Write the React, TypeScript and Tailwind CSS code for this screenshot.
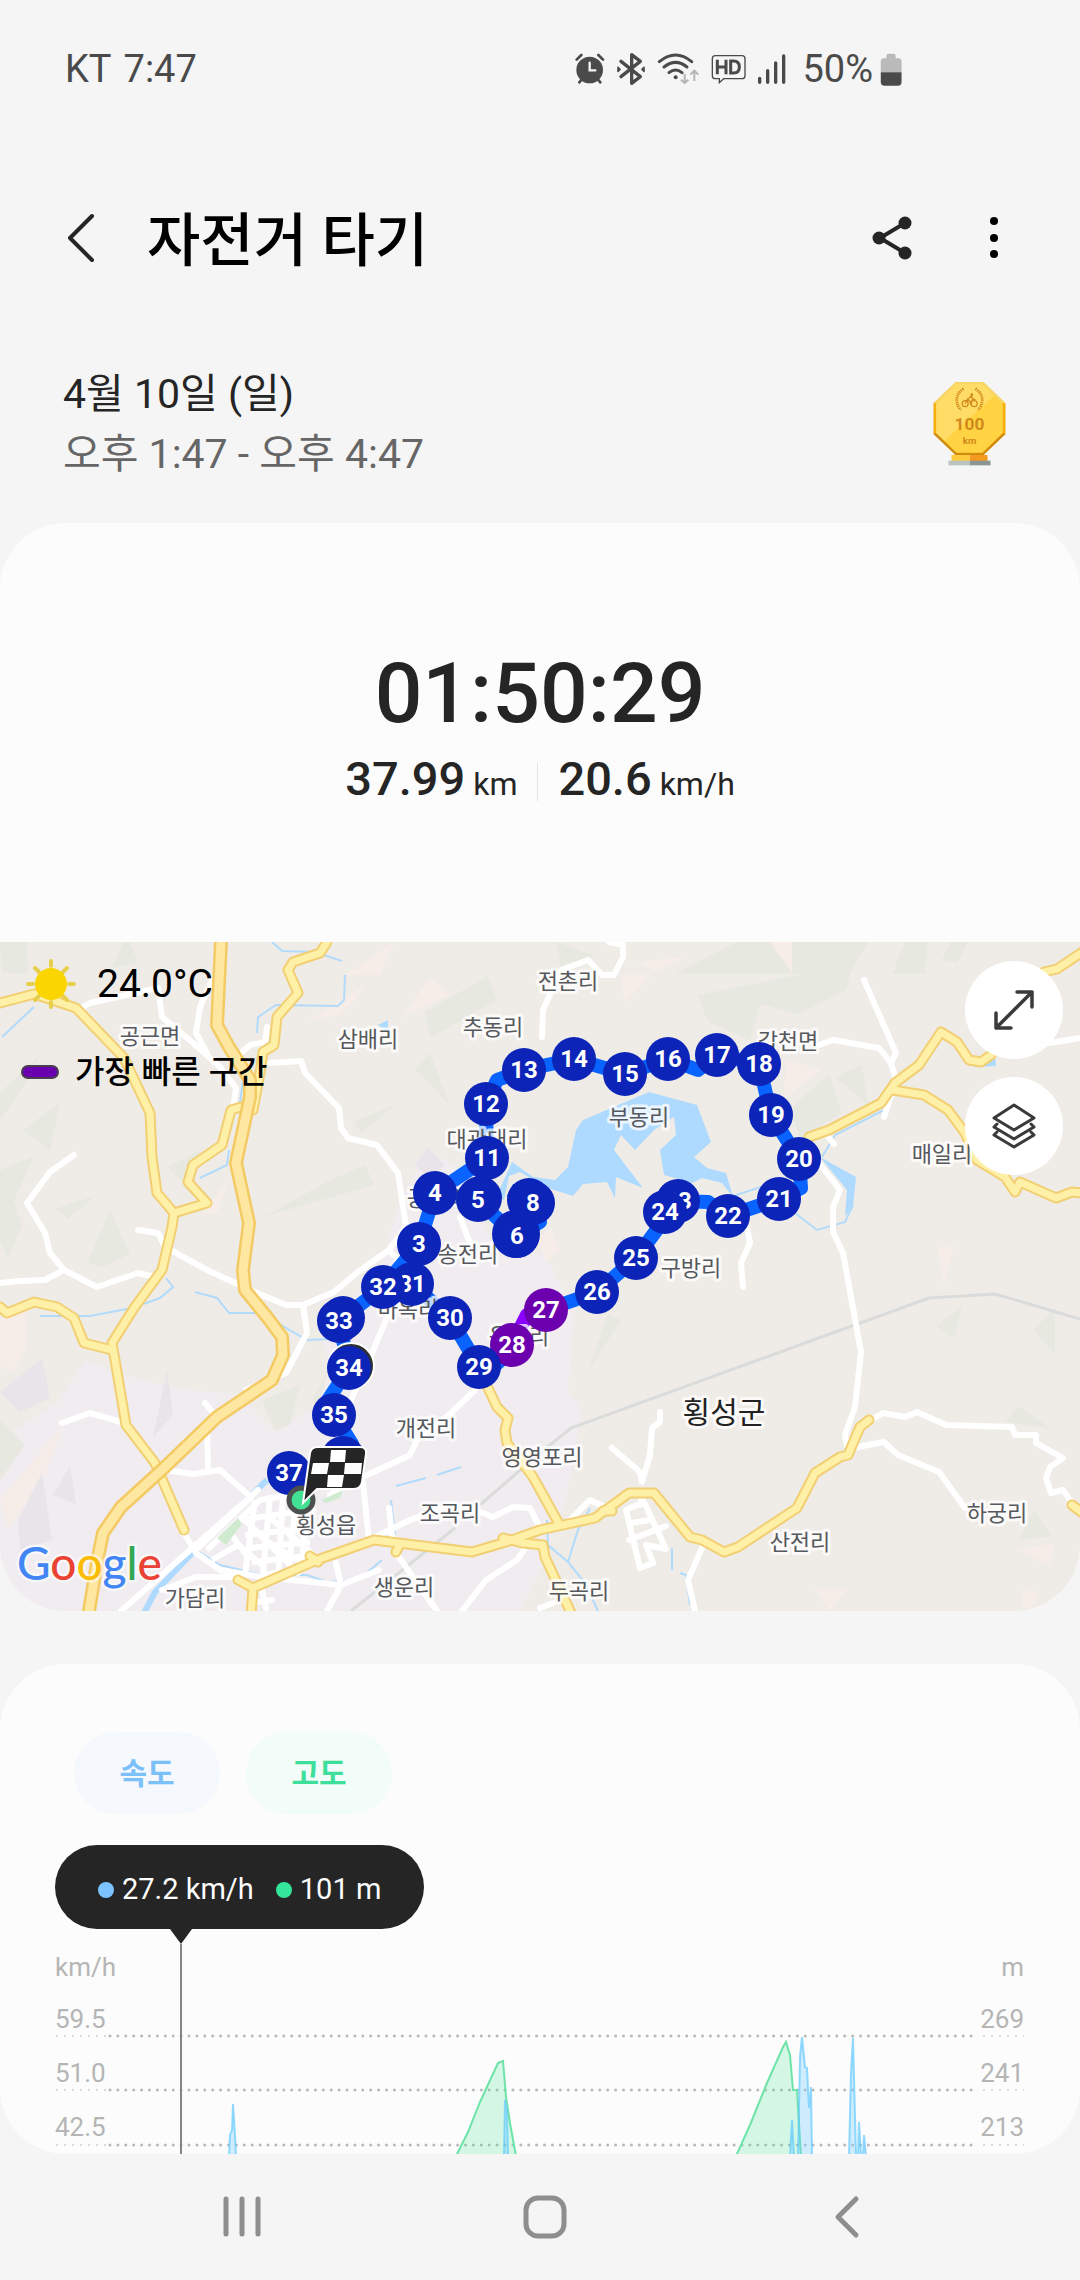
import type { ReactNode } from "react";

/* ---------- status bar icons ---------- */

function AlarmIcon() {
  return (
    <svg className="h-[32px] w-[30px]" viewBox="47 68 90 96" aria-hidden="true">
      <circle cx="91" cy="119" r="40" fill="#4a4a4a" />
      <path d="M66 74 52 88M117 74l14 14M60 156l10-12M123 156l-10-12" stroke="#4a4a4a" strokeWidth="8" strokeLinecap="round" />
      <path d="M91 97v23h17" stroke="#f5f5f5" strokeWidth="7" fill="none" strokeLinecap="round" />
    </svg>
  );
}

function BluetoothIcon() {
  return (
    <svg className="h-[34px] w-[30px]" viewBox="179 65 90 100" aria-hidden="true">
      <path d="m194 92 58 46-26 20V72l26 20-58 46" stroke="#4a4a4a" strokeWidth="10" fill="none" strokeLinecap="round" strokeLinejoin="round" />
      <path d="m185 110 6 6-6 6ZM263 110l-6 6 6 6Z" stroke="#4a4a4a" strokeWidth="5" fill="#4a4a4a" strokeLinejoin="round" />
    </svg>
  );
}

function WifiIcon() {
  return (
    <svg className="h-[34px] w-[43px]" viewBox="304 62 129 102" aria-hidden="true">
      <g stroke="#4a4a4a" strokeWidth="9" fill="none" strokeLinecap="round">
        <path d="M311 91q49-40 97 0" />
        <path d="M325 107q35-28 69 0" />
        <path d="M340 124q20-16 39 0" />
      </g>
      <circle cx="360" cy="138" r="6" fill="#4a4a4a" />
      <path d="M387 127v28m-11-10 11 10 11-10M416 149v-30m-12 11 12-12 12 12" stroke="#b4b4b4" strokeWidth="6" fill="none" />
    </svg>
  );
}

function HdIcon() {
  return (
    <svg className="h-[30px] w-[35px]" viewBox="465 72 105 90" aria-hidden="true">
      <path d="M478 77h80q9 0 9 9v51q0 9-9 9h-55l-13 12v-12h-12q-9 0-9-9V86q0-9 9-9Z" stroke="#4a4a4a" strokeWidth="4" fill="none" />
      <path d="M484 89v44M510 89v44M484 111h26M524 93v36h9q17 0 17-18t-17-18Z" stroke="#4a4a4a" strokeWidth="9" fill="none" />
    </svg>
  );
}

function SignalIcon() {
  return (
    <svg className="h-[30px] w-[29px]" viewBox="595 68 87 90" aria-hidden="true">
      <path d="M603 141v12M627 118v35M651 95v58M675 74v79" stroke="#4a4a4a" strokeWidth="10" strokeLinecap="round" />
    </svg>
  );
}

function BatteryIcon() {
  return (
    <svg className="h-[33px] w-[22px]" viewBox="958 62 66 100" aria-hidden="true">
      <path d="M960 120V88q0-10 10-10h7V70q0-6 6-6h16q6 0 6 6v8h8q10 0 10 10v32Z" fill="#bababa" />
      <path d="M960 120h63v30q0 11-11 11h-41q-11 0-11-11Z" fill="#4a4a4a" />
    </svg>
  );
}

/* ---------- badge ---------- */

function Badge() {
  return (
    <svg className="h-[84px] w-[73px]" viewBox="41 32 218 252" role="img" aria-label="100 km">
      <path d="M96 251h55v18H96Z" fill="#ffcb3c" />
      <path d="M151 251h53v18h-53Z" fill="#f59a1e" />
      <path d="M87 268h64v14H87Z" fill="#b9c4c1" />
      <path d="M151 268h62v14h-62Z" fill="#8b9695" />
      <path d="M108 33h84l66 63v92l-66 63h-84l-66-63V96Z" fill="#f5ae0b" />
      <path d="M108 33h84l66 63h-12l-58-57h-76l-58 57H42Z" fill="#f7d768" />
      <path d="m42 188 66 63h84l66-63-8-3-62 59h-76l-62-59Z" fill="#cf8b12" />
      <path d="M111 38h78l61 61v86l-61 59h-78l-61-59V99Z" fill="#ffd341" />
      <path d="M111 38h78l35 35L75 208l-25-23V99Z" fill="#ffdc66" />
      <g stroke="#d08a1c" fill="none" strokeWidth="3.5">
        <circle cx="137" cy="97" r="9" />
        <circle cx="164" cy="97" r="9" />
        <path d="m137 97 7-14 9 10v8M146 84l9-10 6 10h7M152 96l8-14" />
        <circle cx="157" cy="70" r="2.5" fill="#d08a1c" />
        <path d="M132 52q-22 16-20 36t13 27M168 52q22 16 20 36t-13 27" strokeWidth="8" strokeDasharray="4 2.5" />
      </g>
      <text x="150" y="176" textAnchor="middle" className="font-[family-name:Roboto] text-[52px] font-bold" fill="#d08a1c">100</text>
      <text x="150" y="218" textAnchor="middle" className="font-[family-name:Roboto] text-[29px] font-bold" fill="#d08a1c">km</text>
    </svg>
  );
}

/* ---------- map ---------- */

const EXPRESSWAY =
  "M221 942 217 1025 229 1047 250 1080 250 1097 236 1163 249 1223 243 1270 245 1290 267 1317 282 1337 283 1355 272 1380 217 1417 165 1467 121 1507 103 1533 98 1557 89 1611";

const MAIN_ROADS = [
  "M0 1003 34 994 76 1008 124 1058 150 1113 152 1157 157 1193 174 1213 172 1227 162 1270 134 1308 112 1343 115 1360 126 1425 155 1463 184 1530",
  "M0 1307 7 1313 34 1302 57 1307 74 1318 84 1343 112 1350",
  "M327 942 320 953 293 962 288 970 298 993 277 1017 274 1045 263 1052 260 1073 253 1110",
  "M241 1107 231 1110 222 1145 193 1165 188 1182 207 1203 174 1213",
  "M809 1137 829 1130 881 1103 895 1083 919 1065 941 1032 957 1042 969 1060 981 1062 991 1055",
  "M893 1090 924 1095 948 1110 965 1133 977 1160 1005 1177 1015 1192 1020 1182 1056 1198 1072 1192 1084 1193",
  "M1044 972 1057 969 1084 951",
  "M238 1580 253 1588 317 1560 374 1540 472 1552 506 1542 540 1530 595 1518 629 1493 654 1493 690 1537 702 1540 724 1552 738 1547 797 1508 815 1473 840 1457 848 1455 860 1427 869 1420",
  "M253 1588 251 1615",
  "M488 1388 497 1407 508 1418 505 1430 507 1443 533 1477 558 1522",
  "M503 1538 523 1543 543 1545 545 1557 572 1615",
  "M1072 1505 1084 1514",
  "M310 1556 318 1562",
  "M396 1552 400 1544",
  "M603 1511 612 1511",
];

const LOCAL_ROADS = [
  "M83 1007 90 1003 158 988 162 1017 193 1043 220 1067 236 1088 234 1103",
  "M212 980 200 1007 196 1033 207 1053",
  "M241 1053 250 1045 265 1042 267 1027",
  "M270 1063 301 1061 305 1073 339 1108 341 1128 348 1138 377 1145 398 1173 406 1227 389 1250 358 1272 334 1292 303 1305 286 1305 257 1293 207 1270 165 1247",
  "M389 1250 400 1262",
  "M303 1305 307 1333 286 1373 246 1390",
  "M74 1155 50 1172 27 1203 45 1233 50 1253 64 1270 97 1287 138 1273 155 1277",
  "M64 1270 45 1280 20 1281 0 1283",
  "M138 1230 158 1233 165 1247",
  "M609 942 623 945 623 957 614 975 602 975 588 960 561 970 543 1010 542 1037",
  "M864 980 896 1053 891 1063 896 1080 884 1117",
  "M819 1045 833 1040 879 1048 891 1063",
  "M819 1163 840 1190 833 1207 833 1232 843 1253 861 1352 855 1407 845 1435 848 1450",
  "M747 1227 750 1243 741 1263 743 1287",
  "M1050 1043 1080 1038",
  "M828 1137 834 1144",
  "M871 1420 883 1413 905 1417 917 1412 946 1425 1012 1427 1015 1435 1036 1435 1036 1443 1063 1458 1050 1467 1046 1478 1051 1493 1063 1490 1072 1503",
  "M857 1447 884 1442 898 1455 939 1472 965 1508",
  "M612 1448 640 1472 642 1482 650 1455 652 1428 660 1422 660 1412",
  "M702 1548 688 1580 695 1611",
  "M626 1510 640 1568 653 1563 646 1545 666 1549 644 1502Z",
  "M629 1540 666 1526M642 1498 640 1505M632 1523 650 1520",
  "M567 1523 590 1500 607 1508",
  "M205 1403 215 1415 207 1427 208 1467",
  "M165 1470 193 1474 220 1470 251 1497 196 1550",
  "M258 1490 121 1611",
  "M184 1533 196 1553 220 1570 262 1577 341 1585 379 1570",
  "M62 1423 90 1413 121 1422",
  "M389 1313 372 1353 351 1400 348 1440",
  "M475 1390 451 1413 417 1440 410 1455 363 1477 330 1495",
  "M363 1483 369 1540",
  "M375 1537 410 1520 450 1505 480 1512 493 1517 513 1507 530 1508 541 1530",
  "M389 1508 393 1545",
  "M396 1553 437 1611M462 1611 486 1580 517 1560 524 1550",
  "M336 1563 341 1585 327 1611",
  "M162 1590 196 1577 238 1577",
  "M460 1217 470 1243",
  "M262 1590 266 1608M258 1602 272 1600",
  "M540 1608 553 1603",
];

const TOWN_STREETS = [
  "M207 1550 260 1500 290 1495 315 1512 M212 1560 238 1545 262 1565 M240 1515 300 1575 M228 1530 250 1560",
  "M255 1500 245 1575 M270 1495 262 1585 M283 1495 278 1580 M296 1500 288 1578 M306 1510 302 1565",
  "M240 1520 310 1510 M245 1535 312 1528 M250 1548 310 1542 M252 1562 308 1556 M262 1575 300 1570",
  "M265 1540 310 1568 M270 1518 320 1560",
];

const STREAMS = [
  "M2 1037 34 1007",
  "M257 1033 258 1017 276 1005 338 1006",
  "M272 942 282 951 315 952 342 961",
  "M345 975 344 1000 338 1006",
  "M195 1292 217 1298 229 1313 255 1313 272 1320 307 1340 331 1339",
  "M166 1278 173 1287 160 1298 132 1308 90 1316 40 1316",
  "M196 1550 220 1565 262 1575 307 1575 327 1582 358 1580 382 1560",
  "M795 1213 817 1230 845 1222 853 1205",
  "M822 1157 835 1135 884 1110",
  "M733 1196 770 1184",
  "M229 1150 227 1165 200 1178",
  "M243 1080 240 1103",
  "M396 1486 426 1478M437 1475 461 1467",
  "M391 1500 395 1535",
  "M590 1508 578 1530 568 1562 585 1583 598 1611",
  "M547 1520 548 1545 568 1562",
  "M672 1548 672 1570M680 1573 686 1575 690 1605",
];

const GREEN_HILLS =
  "M0 942H27L28 974 2 972ZM123 942 112 968 138 962 130 942ZM0 1093 40 1054 32 1075 0 1120ZM23 1130 60 1103 50 1151ZM0 1170 34 1156 14 1200 22 1225 8 1260 0 1240ZM55 1209 96 1195 68 1219ZM88 1262 110 1209 130 1254 100 1268ZM168 1167 200 1150 185 1185ZM263 1217 330 1180 365 1165 374 1185ZM353 1122 396 1104 362 1133ZM425 1012 488 976 497 1000 430 1038ZM430 1053 450 1105 415 1070ZM557 942 594 955 560 970ZM675 974 737 942H868L850 974ZM698 995 804 974H850L846 990 798 1014 760 1004 750 1040 708 1022ZM892 974 905 942H928L925 974ZM942 960 950 942H968L957 963ZM790 1110 829 1073 842 1113 800 1138ZM835 1077 862 1065 868 1105ZM588 1371 608 1314 621 1320ZM936 1326 962 1306 954 1338ZM1033 1330 1055 1308 1055 1354ZM1006 1422 1018 1406 1050 1428ZM1018 1540 1034 1510 1052 1536ZM0 1420 25 1445 0 1480ZM312 1400 327 1372 318 1412ZM275 1430 262 1400 300 1385 290 1425Z";

const PEACH_HILLS =
  "M310 1020 365 985 355 1000 340 1015ZM345 975 394 942 380 975ZM402 1017 430 978 450 995ZM638 962 686 957 655 972ZM620 975 650 975 625 1003ZM770 942H792V973ZM787 1060 821 1070 783 1100ZM937 1247H954L944 1284ZM1017 1549 1054 1544 1050 1566ZM815 1589H847L830 1611ZM1023 1590 1040 1592 1030 1610 1023 1608ZM538 1240 550 1228 560 1250 546 1262ZM0 1315 28 1310 25 1350 14 1372 0 1365ZM0 1500 64 1424 45 1475 8 1530ZM200 1216 228 1180 218 1212Z";

const MAUVE_HILLS =
  "M0 1392 42 1358 50 1398 20 1412ZM153 1437 167 1370 173 1415ZM18 1520 42 1473 52 1540 20 1550ZM53 1495 70 1466 76 1504ZM415 1165 428 1147 445 1165 430 1178Z";

const LAKE =
  "M497 1195 512 1162 533 1177 555 1180 568 1167 576 1130 583 1120 649 1092 697 1105 711 1142 694 1157 707 1168 726 1173 733 1197 722 1183 702 1178 692 1183 664 1175 660 1150 676 1135 674 1117 654 1130 635 1150 621 1135 614 1150 643 1188 616 1177 615 1198 607 1182 583 1184 573 1196 545 1187 520 1172 509 1176 504 1200Z";

type Label = { name: string; x: number; y: number };

const LABELS: Label[] = [
  { name: "공근면", x: 150, y: 1036 },
  { name: "삼배리", x: 368, y: 1039 },
  { name: "추동리", x: 493, y: 1027 },
  { name: "전촌리", x: 568, y: 981 },
  { name: "갑천면", x: 788, y: 1041 },
  { name: "부동리", x: 639, y: 1117 },
  { name: "매일리", x: 942, y: 1154 },
  { name: "대관대리", x: 487, y: 1139 },
  { name: "공근리", x: 437, y: 1198 },
  { name: "송전리", x: 468, y: 1254 },
  { name: "구방리", x: 691, y: 1268 },
  { name: "마옥리", x: 408, y: 1309 },
  { name: "용둔리", x: 519, y: 1336 },
  { name: "개전리", x: 426, y: 1428 },
  { name: "영영포리", x: 542, y: 1457 },
  { name: "조곡리", x: 450, y: 1513 },
  { name: "횡성읍", x: 326, y: 1525 },
  { name: "가담리", x: 195, y: 1598 },
  { name: "생운리", x: 404, y: 1587 },
  { name: "두곡리", x: 579, y: 1591 },
  { name: "산전리", x: 800, y: 1542 },
  { name: "하궁리", x: 997, y: 1513 },
];

type Marker = { km: string; x: number; y: number; fast?: boolean };

const MARKERS: Marker[] = [
  { km: "37", x: 289, y: 1473 },
  { km: "35", x: 334, y: 1415 },
  { km: "34", x: 349, y: 1368 },
  { km: "33", x: 339, y: 1321 },
  { km: "31", x: 412, y: 1284 },
  { km: "32", x: 383, y: 1287 },
  { km: "30", x: 450, y: 1318 },
  { km: "28", x: 512, y: 1345, fast: true },
  { km: "29", x: 479, y: 1367 },
  { km: "27", x: 546, y: 1310, fast: true },
  { km: "26", x: 597, y: 1292 },
  { km: "25", x: 636, y: 1258 },
  { km: "23", x: 678, y: 1201 },
  { km: "24", x: 665, y: 1212 },
  { km: "22", x: 728, y: 1216 },
  { km: "21", x: 779, y: 1199 },
  { km: "20", x: 799, y: 1159 },
  { km: "19", x: 771, y: 1115 },
  { km: "18", x: 759, y: 1064 },
  { km: "17", x: 717, y: 1055 },
  { km: "16", x: 668, y: 1059 },
  { km: "15", x: 625, y: 1074 },
  { km: "14", x: 574, y: 1059 },
  { km: "13", x: 524, y: 1070 },
  { km: "12", x: 486, y: 1104 },
  { km: "5", x: 478, y: 1200 },
  { km: "11", x: 487, y: 1158 },
  { km: "4", x: 435, y: 1193 },
  { km: "3", x: 419, y: 1244 },
  { km: "6", x: 517, y: 1236 },
  { km: "8", x: 533, y: 1203 },
];

const ROUTE =
  "M300 1500 289 1478M343 1460 352 1444 334 1415 328 1400 349 1368 339 1321 383 1287 419 1244 435 1193 487 1158 486 1104 497 1080 524 1070 574 1059 625 1074 668 1059 698 1070 717 1055 759 1064 771 1115 799 1159 801 1188 779 1199 728 1216 708 1202 678 1201 636 1258 597 1292 546 1310M512 1350 492 1368 479 1367 450 1318 412 1284 383 1287M435 1193 478 1200 516 1236 540 1222 532 1202 510 1190";

function RouteMap() {
  return (
    <svg
      className="block aspect-[1080/669] w-full"
      viewBox="0 942 1080 669"
      preserveAspectRatio="xMidYMid slice"
      role="img"
      aria-label="운동 경로 지도"
    >
      <rect y="942" width="1080" height="669" fill="#efece7" />
      <path
        d="M0 1440 60 1400 85 1360 125 1375 170 1388 240 1395 275 1432 318 1405 330 1370 320 1330 380 1270 400 1200 428 1150 470 1175 490 1240 545 1255 575 1310 568 1390 582 1410 566 1500 545 1560 520 1611H0Z"
        fill="#f0ecf0"
      />
      <path d={GREEN_HILLS} fill="#e7e8df" />
      <path d={PEACH_HILLS} fill="#f6ede8" />
      <path d={MAUVE_HILLS} fill="#e8e4e9" />
      <path d="M540 1453 571 1428 929 1298 995 1294 1080 1319M540 1453 480 1505M455 1528 351 1611" stroke="#d9dcdb" strokeWidth="3" fill="none" />
      <path d={LAKE} fill="#aedaff" />
      <path d="M820 1157 856 1177 853 1207 845 1216 847 1190ZM970 1063 995 1055 996 1066 975 1067ZM378 1025 388 1020 388 1032Z" fill="#aedaff" />
      <path d="M267 1480 200 1545 155 1592 143 1615" stroke="#aedaff" strokeWidth="6" fill="none" />
      <g stroke="#b2dbfb" strokeWidth="2" fill="none">
        {STREAMS.map((d) => <path key={d} d={d} />)}
      </g>
      <g stroke="#ffffff" strokeWidth="6" fill="none" strokeLinejoin="round" strokeLinecap="round">
        {LOCAL_ROADS.map((d) => <path key={d} d={d} />)}
      </g>
      <g stroke="#ffffff" strokeWidth="6" fill="none">
        {TOWN_STREETS.map((d) => <path key={d} d={d} />)}
      </g>
      <path d="M217 1538 238 1518 242 1524 226 1545ZM322 1500 343 1490 340 1498 325 1503Z" fill="#cfeace" />
      <g fill="none" strokeLinejoin="round" strokeLinecap="round">
        <g stroke="#f2cf72" strokeWidth="11">
          {MAIN_ROADS.map((d) => <path key={d} d={d} />)}
        </g>
        <g stroke="#fff0a8" strokeWidth="7">
          {MAIN_ROADS.map((d) => <path key={d} d={d} />)}
        </g>
        <path d={EXPRESSWAY} stroke="#f4ca64" strokeWidth="14" />
        <path d={EXPRESSWAY} stroke="#fee7a0" strokeWidth="9" />
      </g>

      <path d={ROUTE} stroke="#0963ff" strokeWidth="14" fill="none" strokeLinejoin="round" />
      <path d="M546 1310 527 1315 512 1345" stroke="#8a00ff" strokeWidth="14" fill="none" strokeLinejoin="round" />

      <g
        textAnchor="middle"
        fill="#55585c"
        stroke="#ffffff"
        strokeOpacity="0.75"
        strokeWidth="6"
        strokeLinejoin="round"
        className="font-[family-name:Noto_Sans_CJK_KR,sans-serif] text-[22px] [paint-order:stroke]"
      >
        {LABELS.map((l) => (
          <text key={l.name} x={l.x} y={l.y + 8}>{l.name}</text>
        ))}
        <text x="724" y="1423" fill="#222222" className="text-[30px]">횡성군</text>
      </g>

      <circle cx="351" cy="1366" r="23" fill="#2e3033" stroke="#ffffff" strokeWidth="2" />
      <g fill="#0c24b8">
        <circle cx="343" cy="1458" r="22" />
        <circle cx="343" cy="1318" r="22" />
        <circle cx="516" cy="1234" r="24" />
        <circle cx="480" cy="1198" r="22" />
        <circle cx="529" cy="1200" r="22" />
      </g>
      {MARKERS.map((m) => (
        <g key={m.km}>
          <circle cx={m.x} cy={m.y} r="22" fill={m.fast ? "#6c00ae" : "#0c24b8"} />
          <text x={m.x} y={m.y + 8} textAnchor="middle" fill="#ffffff" className="font-[family-name:Roboto,sans-serif] text-[24px] font-bold">
            {m.km}
          </text>
        </g>
      ))}

      <circle cx="301" cy="1500" r="12" fill="#41e093" stroke="#4b504e" strokeWidth="5" />
      <path
        d="M318 1447H360Q367 1447 366 1454L362 1482Q361 1489 354 1489H317L303 1503 310 1453Q311 1447 318 1447Z"
        fill="#252525"
        stroke="#ffffff"
        strokeWidth="2"
      />
      <path d="M331 1450h15l-1 12h-15ZM313 1463h16l-2 11h-16ZM345 1463h17l-1 11h-17ZM328 1475h16l-2 12h-15Z" fill="#ffffff" />

      <text
        x="17"
        y="1580"
        stroke="#ffffff"
        strokeOpacity="0.6"
        strokeWidth="5"
        strokeLinejoin="round"
        className="font-[family-name:Lato,sans-serif] text-[46px] font-medium [paint-order:stroke]"
      >
        <tspan fill="#4285f4">G</tspan>
        <tspan fill="#ea4335">o</tspan>
        <tspan fill="#fbbc05">o</tspan>
        <tspan fill="#4285f4">g</tspan>
        <tspan fill="#34a853">l</tspan>
        <tspan fill="#ea4335">e</tspan>
      </text>
    </svg>
  );
}

function SunIcon() {
  return (
    <svg className="h-[50px] w-[50px]" viewBox="0 0 50 50" aria-hidden="true">
      <path d="M25 2v5M25 43v5M2 25h5M43 25h5M9 9l4 4M37 37l4 4M41 9l-4 4M13 37l-4 4" stroke="#e6cf4a" strokeWidth="4" strokeLinecap="round" />
      <circle cx="25" cy="25" r="16" fill="#fad500" />
    </svg>
  );
}

function RoundButton({ label, children }: { label: string; children: ReactNode }) {
  return (
    <button type="button" aria-label={label} className="flex size-[98px] items-center justify-center rounded-full bg-white">
      {children}
    </button>
  );
}

/* ---------- chart ---------- */

const AXIS = [
  { speed: "59.5", altitude: "269", y: 2036 },
  { speed: "51.0", altitude: "241", y: 2090 },
  { speed: "42.5", altitude: "213", y: 2145 },
];

const SPEED_PEAKS = [
  "M229 2156 230 2135 232 2130 233 2104 235 2135 236 2156",
  "M504 2156 505 2100 507 2110 508 2156",
  "M790 2156 792 2120 794 2156",
  "M798 2156 800 2057 802 2037 805 2067 807 2068 809 2108 811 2087 812 2156",
  "M849 2156 851 2073 853 2038 856 2156",
  "M858 2156 859 2122 861 2156",
  "M863 2156 864 2135 866 2156",
];

const ALTITUDE_PEAKS = [
  "M456 2156 468 2132 480 2102 498 2063 503 2061 506 2097 510 2123 516 2156",
  "M736 2156 750 2125 767 2083 783 2047 786 2042 790 2055 793 2090 797 2090 801 2156",
];

function ChartPlot() {
  return (
    <svg className="absolute inset-0 h-full w-full" viewBox="55 1944 969 210" preserveAspectRatio="none" aria-hidden="true">
      {AXIS.map((a) => (
        <g key={a.y} stroke="#b9b9b9">
          <path d={`M110 ${a.y}H976`} strokeWidth="3" strokeDasharray="0 7.9" strokeLinecap="round" />
          <path d={`M56 ${a.y}H106M983 ${a.y}H1024`} strokeWidth="1" strokeDasharray="2 6" />
        </g>
      ))}
      {ALTITUDE_PEAKS.map((d) => <path key={d} d={d} fill="#34e38c" fillOpacity="0.2" stroke="#6ee3a9" strokeWidth="2" />)}
      {SPEED_PEAKS.map((d) => <path key={d} d={d} fill="#78cfff" fillOpacity="0.35" stroke="#5cc8ff" strokeOpacity="0.65" strokeWidth="2" />)}
      <path d="M181 1944V2154" stroke="#858585" strokeWidth="2" />
    </svg>
  );
}

export default function App() {
  return (
    <div className="flex min-h-screen flex-col overflow-x-hidden bg-[#f5f5f5] font-[family-name:Roboto,Noto_Sans_CJK_KR,sans-serif] text-[#252525]">
      <div className="flex h-[138px] items-center justify-between pr-[178px] pl-[65px] text-[38px] text-[#4a4a4a]">
        <div className="flex items-baseline gap-3">
          <span>KT</span>
          <span>7:47</span>
        </div>
        <div className="flex items-center gap-[11px]">
          <AlarmIcon />
          <BluetoothIcon />
          <WifiIcon />
          <HdIcon />
          <SignalIcon />
          <div className="flex items-center gap-[7px] pl-[5px]">
            <span>50%</span>
            <BatteryIcon />
          </div>
        </div>
      </div>

      <header className="flex h-[200px] items-center pr-[62px] pl-[56px]">
        <button type="button" aria-label="뒤로" className="flex size-[50px] items-center justify-center">
          <svg className="h-[50px] w-[28px]" viewBox="0 0 28 50" fill="none" stroke="#252525" strokeWidth="4" strokeLinecap="round" strokeLinejoin="round" aria-hidden="true">
            <path d="M25 3 3 25l22 22" />
          </svg>
        </button>
        <h1 className="ml-[41px] flex-1 pt-[6px] text-[58px] leading-[72px] font-medium text-black">자전거 타기</h1>
        <div className="flex items-center gap-[48px]">
          <button type="button" aria-label="공유" className="flex size-[60px] items-center justify-center">
            <svg className="h-[46px] w-[42px]" viewBox="0 0 42 46" aria-hidden="true">
              <path d="M34 8 9 23l25 15" stroke="#252525" strokeWidth="4" fill="none" />
              <circle cx="34" cy="8" r="6.5" fill="#252525" />
              <circle cx="8" cy="23" r="6.5" fill="#252525" />
              <circle cx="34" cy="38" r="6.5" fill="#252525" />
            </svg>
          </button>
          <button type="button" aria-label="옵션 더보기" className="flex h-[60px] w-[48px] items-center justify-center">
            <svg className="h-[46px] w-[12px]" viewBox="0 0 12 46" aria-hidden="true">
              <circle cx="6" cy="6" r="4" />
              <circle cx="6" cy="23" r="4" />
              <circle cx="6" cy="39" r="4" />
            </svg>
          </button>
        </div>
      </header>

      <section className="flex items-center justify-between px-[63px] pt-[26px] pb-[39px] text-[41px] leading-[60px]">
        <div>
          <p>4월 10일 (일)</p>
          <p className="text-[#666666]">오후 1:47 - 오후 4:47</p>
        </div>
        <div className="pr-[11px]">
          <Badge />
        </div>
      </section>

      <main className="flex flex-1 flex-col gap-[53px]">
        <section className="overflow-hidden rounded-[66px] bg-[#fcfcfc]">
          <div className="flex h-[419px] flex-col items-center pt-[123px] font-medium">
            <p className="text-[84px] leading-[96px]">01:50:29</p>
            <div className="mt-[9px] flex items-center text-[47px] leading-[56px]">
              <p className="flex items-baseline gap-2 pr-[20px]">
                37.99 <span className="text-[32px] font-normal">km</span>
              </p>
              <div className="h-[38px] w-px bg-[#e4e4e4]" />
              <p className="flex items-baseline gap-2 pl-[20px]">
                20.6 <span className="text-[32px] font-normal">km/h</span>
              </p>
            </div>
          </div>
          <div className="relative">
            <RouteMap />
            <div className="absolute top-[17px] left-[21px] text-black">
              <div className="flex items-center gap-[21px] pl-[5px]">
                <SunIcon />
                <span className="text-[39px] leading-[48px]">24.0°C</span>
              </div>
              <div className="mt-[39px] flex items-center gap-[16px]">
                <span className="h-[14px] w-[38px] rounded-full border-2 border-[#4a3f50] bg-[#6a00ae]" />
                <span className="text-[32px] leading-[48px] font-medium">가장 빠른 구간</span>
              </div>
            </div>
            <div className="absolute top-[19px] right-[17px] flex flex-col gap-[18px]">
              <RoundButton label="지도 확대">
                <svg className="size-[42px]" viewBox="0 0 42 42" fill="none" stroke="#3a3a3a" strokeWidth="3.5" strokeLinecap="round" strokeLinejoin="round" aria-hidden="true">
                  <path d="M24 3h15v15M39 3 3 39M3 24v15h15" />
                </svg>
              </RoundButton>
              <RoundButton label="지도 유형">
                <svg className="size-[48px]" viewBox="0 0 48 48" fill="none" stroke="#3a3a3a" strokeWidth="3" strokeLinecap="round" strokeLinejoin="round" aria-hidden="true">
                  <path d="m24 3 20 13-20 12L4 16Z" />
                  <path d="m4 25 20 12 20-12M4 33l20 12 20-12M4 25l3-3M44 25l-3-3M4 33l3-3M44 33l-3-3" />
                </svg>
              </RoundButton>
            </div>
          </div>
        </section>

        <section className="flex-1 overflow-hidden rounded-[66px] bg-[#fcfcfc] pt-[68px] pr-[56px] pl-[55px]">
          <div className="flex gap-[26px] pl-[19px] text-[30px] font-bold">
            <button type="button" className="h-[82px] w-[146px] rounded-full bg-[#f5f9fd] text-[#7cc0f9]">속도</button>
            <button type="button" className="h-[82px] w-[146px] rounded-full bg-[#f2fcf8] text-[#3ddf9a]">고도</button>
          </div>
          <div className="relative mt-[31px] flex h-[84px] w-fit items-center gap-[22px] rounded-full bg-[#252525] px-[43px] pt-[5px] text-[29px] text-[#fcfcfc]">
            <span className="flex items-center gap-2">
              <span className="size-4 rounded-full bg-[#7cc4ff]" />
              27.2 km/h
            </span>
            <span className="flex items-center gap-2">
              <span className="size-4 rounded-full bg-[#34e59c]" />
              101 m
            </span>
            <svg className="absolute top-full left-[115px] h-[15px] w-[22px]" viewBox="0 0 22 15" aria-hidden="true">
              <path d="M0 0h22L11 15Z" fill="#252525" />
            </svg>
          </div>
          <div className="relative mt-[15px] h-[210px] text-[26px] leading-[32px] text-[#b5b5b5]">
            <ChartPlot />
            <div className="flex h-[39px] items-end justify-between">
              <span>km/h</span>
              <span>m</span>
            </div>
            {AXIS.map((a) => (
              <div key={a.speed} className="flex h-[54px] items-end justify-between pb-[2px]">
                <span>{a.speed}</span>
                <span>{a.altitude}</span>
              </div>
            ))}
          </div>
        </section>
      </main>

      <nav className="flex h-[126px] items-center justify-between pr-[185px] pl-[194px]">
        <button type="button" aria-label="최근 앱" className="flex size-24 items-center justify-center">
          <svg className="size-[44px]" viewBox="0 0 44 44" stroke="#8e8e8e" strokeWidth="5" strokeLinecap="round" aria-hidden="true">
            <path d="M6 4v35M22 4v35M38 4v35" />
          </svg>
        </button>
        <button type="button" aria-label="홈" className="flex size-24 items-center justify-center">
          <svg className="size-[44px]" viewBox="0 0 44 44" fill="none" stroke="#8e8e8e" strokeWidth="5" aria-hidden="true">
            <rect x="3" y="3" width="38" height="38" rx="12" />
          </svg>
        </button>
        <button type="button" aria-label="뒤로 가기" className="flex size-24 items-center justify-center">
          <svg className="size-[44px]" viewBox="0 0 44 44" fill="none" stroke="#8e8e8e" strokeWidth="5" strokeLinecap="round" strokeLinejoin="round" aria-hidden="true">
            <path d="M31 4 13 22l18 18" />
          </svg>
        </button>
      </nav>
    </div>
  );
}
